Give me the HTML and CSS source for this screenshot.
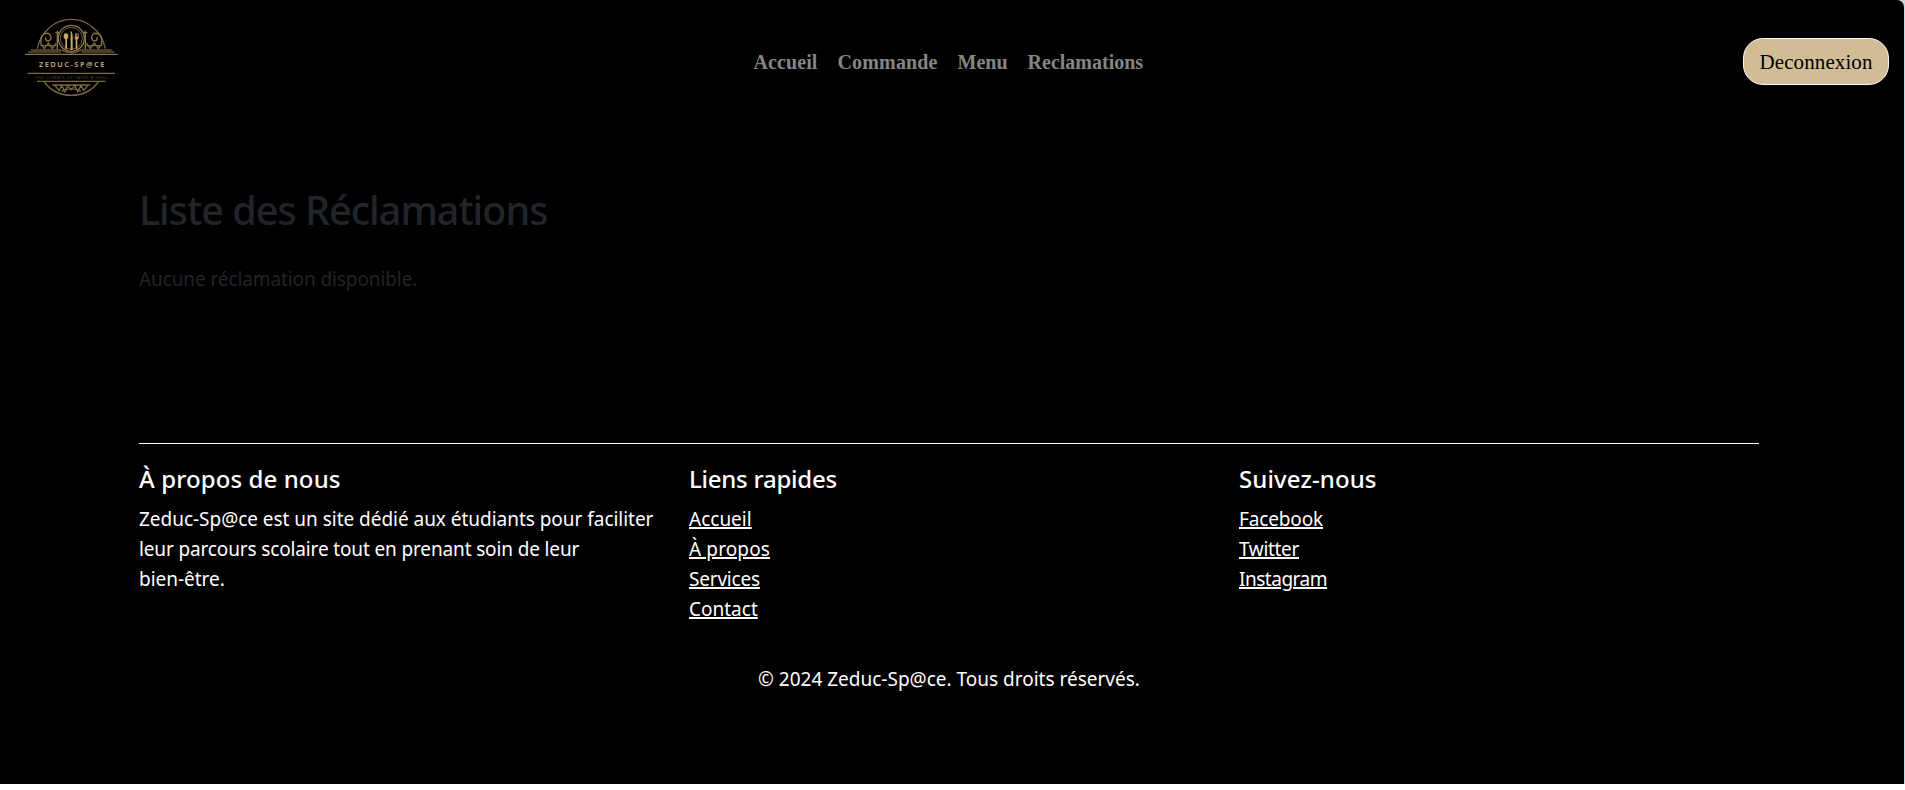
FILE: index.html
```html
<!DOCTYPE html>
<html lang="fr">
<head>
<meta charset="utf-8">
<title>Zeduc-Sp@ce</title>
<link rel="stylesheet" href="styles.css">
</head>
<body>
<div class="frame">
<div class="page">
  <header class="header">
    <svg class="logo" viewBox="0 0 345 285" role="img" aria-label="Zeduc-Sp@ce">
      <g fill="none" stroke="#8f7850" stroke-width="4">
        <path d="M67 122A104 109 0 0 1 271 122" stroke="#75654a" stroke-width="4"/>
        <circle cx="169" cy="91" r="39"/>
        <circle cx="169" cy="91" r="33" stroke-width="3" stroke="#6f5c3c"/>
        <path d="M127 68v58M211 68v58M121 74h12M205 74h12"/>
        <path d="M79 105C70 75 107 66 108 88C108 103 88 101 92 88M259 105C268 75 231 66 230 88C230 103 250 101 246 88"/>
        <path d="M76 105l12 17 12-17 12 17 12-17M76 113h48M262 105l-12 17-12-17-12 17-12-17M214 113h48" stroke="#75633f"/>
        <path d="M48 126h92M198 126h92M40 132h98M200 132h98M140 126q29 16 58 0" stroke-width="5" stroke="#665435"/>
        <path d="M30 139h278" stroke="#8a734c"/>
        <path d="M38 196h262M66 220h206" stroke="#7c6744"/>
        <path d="M88 222Q118 262 169 262Q220 262 250 222" stroke="#75654a"/>
        <path d="M112 231h114M120 233l12 15 8-15 10 18 8-18 11 12 11-12 8 18 10-18 8 15 12-15M140 250q29-16 58 0" stroke="#7c6744"/>
      </g>
      <g fill="#c9a76a">
        <ellipse cx="153" cy="85" rx="7" ry="9"/>
        <path d="M151 90h5v33h-5zM167 68q7 2 6 30v28h-6zM180 76h2v10h2V76h2v10h2V76h3v14l-4 5v28h-5V95l-3-5z"/>
      </g>
      <text class="logo-name" x="72" y="178" textLength="196">ZEDUC-SP@CE</text>
      <text class="logo-tag" x="60" y="214" textLength="220">THE CLIMATE OF TASTE &amp; CHILL</text>
    </svg>
    <nav class="nav">
      <a class="nav-link accueil">Accueil</a>
      <a class="nav-link commande">Commande</a>
      <a class="nav-link menu">Menu</a>
      <a class="nav-link reclamations">Reclamations</a>
    </nav>
    <a class="logout">Deconnexion</a>
  </header>
  <main class="main">
    <h1 class="title">Liste des Réclamations</h1>
    <p class="empty">Aucune réclamation disponible.</p>
  </main>
  <footer class="footer">
    <div class="columns">
      <section class="column">
        <h5 class="heading heading-about">À propos de nous</h5>
        <p class="about">Zeduc-Sp@ce est un site dédié aux étudiants pour faciliter<br><span class="about-middle">leur parcours scolaire tout en prenant soin de leur</span><br>bien-être.</p>
      </section>
      <section class="column">
        <h5 class="heading heading-links">Liens rapides</h5>
        <ul class="links">
          <li><a class="link">Accueil</a></li>
          <li><a class="link link-apropos">À propos</a></li>
          <li><a class="link link-services">Services</a></li>
          <li><a class="link">Contact</a></li>
        </ul>
      </section>
      <section class="column">
        <h5 class="heading heading-social">Suivez-nous</h5>
        <ul class="links">
          <li><a class="link link-facebook">Facebook</a></li>
          <li><a class="link link-twitter">Twitter</a></li>
          <li><a class="link link-instagram">Instagram</a></li>
        </ul>
      </section>
    </div>
    <p class="copyright">© 2024 Zeduc-Sp@ce. Tous droits réservés.</p>
  </footer>
</div>
</div>
</body>
</html>
```
FILE: styles.css
```css
* {
  box-sizing: border-box;
}

html {
  background: #fff;
}

body {
  margin: 0;
  font-family: "Noto Sans", "Open Sans", sans-serif;
  font-size: 19px;
  line-height: 30px;
  color: #fff;
}

.frame {
  height: 790px;
  padding-right: 1px;
  border-bottom: 6px solid #fff;
  background: #c3dadc;
  overflow: hidden;
}

.page {
  height: 784px;
  border-top-right-radius: 7px;
  background: #000;
}

.header {
  display: grid;
  grid-template-columns: 738.5px auto 1fr;
  align-items: start;
  height: 180px;
  padding: 8px 15px 0 15px;
}

.logo {
  width: 115px;
  height: 95px;
}

.logo-name {
  font: bold 22px "Open Sans", sans-serif;
  fill: #b39a6c;
}

.logo-tag {
  font: 12px "Open Sans", sans-serif;
  fill: #66512e;
}

.nav {
  display: flex;
  gap: 20px;
  padding-top: 39px;
}

.nav-link {
  font-family: "Liberation Serif", serif;
  font-weight: bold;
  font-size: 20px;
  color: #858585;
}

.accueil {
  letter-spacing: 0.1px;
}

.commande {
  letter-spacing: 0.15px;
}

.logout {
  justify-self: end;
  width: 146px;
  height: 47px;
  margin-top: 30px;
  padding-top: 8px;
  border: 1px solid #f8f9fa;
  border-radius: 20px;
  background: #d0bd96;
  color: #000;
  font-family: "Liberation Serif", serif;
  font-size: 21px;
  letter-spacing: 0.1px;
  text-align: center;
}

.main {
  height: 263px;
  padding: 6px 139px 0;
  color: #212529;
}

.title {
  margin: 0 0 30px;
  font-size: 39.5px;
  font-weight: 500;
  line-height: 48px;
  letter-spacing: -0.97px;
}

.empty {
  margin: 0;
  letter-spacing: -0.1px;
}

.footer {
  margin: 0 145px 0 139px;
  border-top: 1px solid #fff;
}

.columns {
  display: grid;
  grid-template-columns: 550px 550px 1fr;
  height: 202px;
  padding-top: 20px;
}

.heading {
  margin: 0 0 10px;
  font-size: 24px;
  font-weight: 500;
  line-height: 30px;
}

.heading-about,
.heading-social {
  letter-spacing: 0.1px;
}

.heading-links {
  letter-spacing: -0.25px;
}

.about,
.links,
.copyright {
  margin: 0;
}

.about {
  letter-spacing: -0.03px;
}

.about-middle {
  letter-spacing: -0.14px;
}

.links {
  padding: 0;
  list-style: none;
}

.link {
  text-decoration: underline 2px;
  text-underline-offset: 1px;
}

.link-apropos {
  letter-spacing: 0.12px;
}

.link-services {
  letter-spacing: -0.2px;
}

.link-facebook {
  letter-spacing: -0.15px;
}

.link-twitter {
  letter-spacing: -0.33px;
}

.link-instagram {
  letter-spacing: -0.48px;
}

.copyright {
  padding-top: 18px;
  text-align: center;
}
```
